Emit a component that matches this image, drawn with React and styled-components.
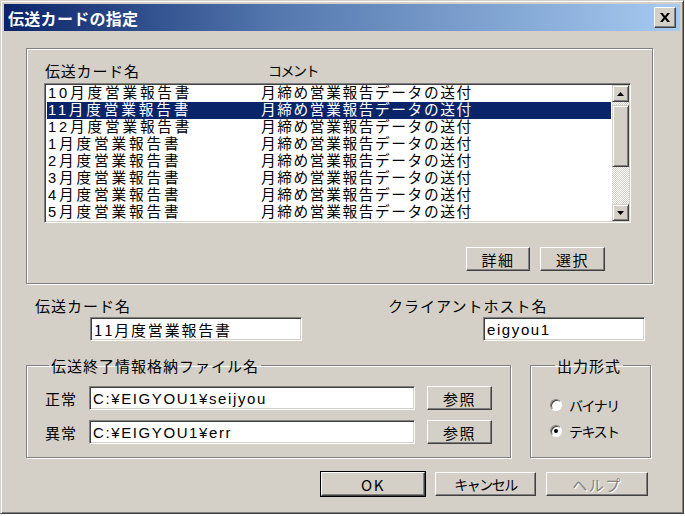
import React from 'react';
import styled, { createGlobalStyle } from 'styled-components';

const GlobalStyle = createGlobalStyle`
  html, body { margin: 0; padding: 0; background: #ffffff; }
  * { box-sizing: border-box; }
  body { font-family: "Noto Sans CJK JP", "Noto Sans", sans-serif; color: #000; }
`;

const FONT = `"Noto Sans CJK JP", "Noto Sans", sans-serif`;
const LIST_FONT = `"Liberation Sans", "Noto Sans CJK JP", sans-serif`;

const rows = [
  { name: '10月度営業報告書', comment: '月締め営業報告データの送付' },
  { name: '11月度営業報告書', comment: '月締め営業報告データの送付', selected: true },
  { name: '12月度営業報告書', comment: '月締め営業報告データの送付' },
  { name: '1月度営業報告書', comment: '月締め営業報告データの送付' },
  { name: '2月度営業報告書', comment: '月締め営業報告データの送付' },
  { name: '3月度営業報告書', comment: '月締め営業報告データの送付' },
  { name: '4月度営業報告書', comment: '月締め営業報告データの送付' },
  { name: '5月度営業報告書', comment: '月締め営業報告データの送付' },
];

export default function App() {
  return (
    <>
      <GlobalStyle />
      <Window>
        <TitleBar>
          <Title>伝送カードの指定</Title>
          <CloseButton>
            <svg width="10" height="9" viewBox="0 0 10 9">
              <path d="M0 0h2.6l2.4 3 2.4-3H10L6.4 4.5 10 9H7.4L5 6 2.6 9H0l3.6-4.5z" fill="#000" />
            </svg>
          </CloseButton>
        </TitleBar>

        <Content>
          <CardGroup>
            <ListHeader>
              <span className="name">伝送カード名</span>
              <span className="comment">コメント</span>
            </ListHeader>
            <ListBox>
              <ListRows>
                {rows.map((r) => (
                  <ListRow key={r.name} $selected={r.selected}>
                    <NameCell>{r.name}</NameCell>
                    <CommentCell>{r.comment}</CommentCell>
                  </ListRow>
                ))}
              </ListRows>
              <ScrollBar>
                <ScrollButton>
                  <svg width="7" height="4" viewBox="0 0 7 4"><path d="M3.5 0L7 4H0z" fill="#000" /></svg>
                </ScrollButton>
                <Track $h={3} />
                <Thumb />
                <Track />
                <ScrollButton>
                  <svg width="7" height="4" viewBox="0 0 7 4"><path d="M0 0h7L3.5 4z" fill="#000" /></svg>
                </ScrollButton>
              </ScrollBar>
            </ListBox>
            <ListButtons>
              <Button $w={64}>詳細</Button>
              <Button $w={65}>選択</Button>
            </ListButtons>
          </CardGroup>

          <FieldRow>
            <Field>
              <Label>伝送カード名</Label>
              <TextBox $indent={55} $w={212}>11月度営業報告書</TextBox>
            </Field>
            <Field>
              <Label>クライアントホスト名</Label>
              <TextBox $indent={95} $w={162} $latin>eigyou1</TextBox>
            </Field>
          </FieldRow>

          <GroupRow>
            <FileGroup>
              <Legend>伝送終了情報格納ファイル名</Legend>
              <FileLine>
                <FileLabel>正常</FileLabel>
                <TextBox $w={326} $latin>C:¥EIGYOU1¥seijyou</TextBox>
                <Button $w={65}>参照</Button>
              </FileLine>
              <FileLine>
                <FileLabel>異常</FileLabel>
                <TextBox $w={326} $latin>C:¥EIGYOU1¥err</TextBox>
                <Button $w={65}>参照</Button>
              </FileLine>
            </FileGroup>
            <FormatGroup>
              <Legend>出力形式</Legend>
              <RadioLine>
                <Radio />
                <RadioText>バイナリ</RadioText>
              </RadioLine>
              <RadioLine>
                <Radio $checked />
                <RadioText>テキスト</RadioText>
              </RadioLine>
            </FormatGroup>
          </GroupRow>

          <DialogButtons>
            <Button $w={104} $default>OK</Button>
            <Button $w={101} $narrow>キャンセル</Button>
            <Button $w={102} $disabled>ヘルプ</Button>
          </DialogButtons>
        </Content>
      </Window>
    </>
  );
}

const Window = styled.div`
  width: 684px;
  height: 514px;
  background: #d4d0c8;
  border: 1px solid;
  border-color: #d4d0c8 #404040 #404040 #d4d0c8;
  box-shadow: inset 1px 1px #ffffff, inset -1px -1px #808080;
  padding: 3px;
  display: flex;
  flex-direction: column;
`;

const TitleBar = styled.div`
  height: 27px;
  background: linear-gradient(to right, #0a246a 0%, #5477ae 40%, #a6caf0 100%);
  display: flex;
  align-items: center;
  justify-content: space-between;
  padding: 0 4px 0 4px;
`;

const Title = styled.div`
  font-family: ${FONT};
  font-weight: 700;
  font-size: 16px;
  color: #ffffff;
  letter-spacing: 0.3px;
`;

const CloseButton = styled.div`
  width: 22px;
  height: 21px;
  background: #d4d0c8;
  border: 1px solid;
  border-color: #ffffff #404040 #404040 #ffffff;
  box-shadow: inset -1px -1px #808080;
  display: flex;
  align-items: center;
  justify-content: center;
`;

const Content = styled.div`
  flex: 1;
  display: flex;
  flex-direction: column;
  padding: 17px 0 0 22px;
`;

const Etched = `
  border: 1px solid #808080;
  box-shadow: inset 1px 1px #ffffff, 1px 1px #ffffff;
`;

const CardGroup = styled.div`
  ${Etched}
  width: 627px;
  height: 236px;
  display: flex;
  flex-direction: column;
  padding: 11px 21px 0 17px;
`;

const ListHeader = styled.div`
  display: flex;
  height: 23px;
  font-family: ${FONT};
  font-size: 15px;
  padding-left: 1px;

  .name {
    width: 223px;
    letter-spacing: 0.8px;
  }

  .comment {
    letter-spacing: -1.5px;
    font-size: 14px;
  }
`;

const ListBox = styled.div`
  height: 140px;
  background: #ffffff;
  border: 1px solid;
  border-color: #808080 #ffffff #ffffff #808080;
  box-shadow: inset 1px 1px #404040, inset -1px -1px #d4d0c8;
  padding: 1px;
  display: flex;
`;

const ListRows = styled.div`
  flex: 1;
  display: flex;
  flex-direction: column;
  overflow: hidden;
  padding: 0 1px;
`;

const ListRow = styled.div`
  height: 17px;
  flex-shrink: 0;
  display: flex;
  align-items: center;
  font-family: ${LIST_FONT};
  font-size: 14.7px;
  line-height: 17px;
  padding-left: 1px;
  background: ${(p) => (p.$selected ? '#0a246a' : 'transparent')};
  color: ${(p) => (p.$selected ? '#ffffff' : '#000000')};
  white-space: nowrap;
`;

const NameCell = styled.span`
  width: 213px;
  letter-spacing: 2.8px;
`;

const CommentCell = styled.span`
  letter-spacing: 1.6px;
`;

const ScrollBar = styled.div`
  width: 17px;
  display: flex;
  flex-direction: column;
`;

const Raised = `
  background: #d4d0c8;
  border: 1px solid;
  border-color: #d4d0c8 #404040 #404040 #d4d0c8;
  box-shadow: inset 1px 1px #ffffff, inset -1px -1px #808080;
`;

const ScrollButton = styled.div`
  ${Raised}
  height: 17px;
  flex-shrink: 0;
  display: flex;
  align-items: center;
  justify-content: center;
`;

const Thumb = styled.div`
  ${Raised}
  height: 62px;
  flex-shrink: 0;
`;

const Track = styled.div`
  flex: ${(p) => (p.$h ? `0 0 ${p.$h}px` : '1')};
  background: repeating-conic-gradient(#ffffff 0 25%, #d4d0c8 0 50%) 0 0 / 2px 2px;
`;

const ListButtons = styled.div`
  display: flex;
  justify-content: flex-end;
  gap: 10px;
  margin-top: 24px;
  padding-right: 26px;
`;

const Button = styled.div`
  width: ${(p) => p.$w}px;
  height: 24px;
  background: #d4d0c8;
  border: 1px solid;
  border-color: #ffffff #404040 #404040 #ffffff;
  box-shadow: ${(p) =>
    p.$default
      ? 'inset -1px -1px #808080, 0 0 0 1px #000000'
      : 'inset -1px -1px #808080'};
  display: flex;
  align-items: center;
  justify-content: center;
  font-family: ${FONT};
  font-size: ${(p) => (p.$narrow ? '14px' : '15px')};
  letter-spacing: ${(p) => (p.$narrow ? '-1.5px' : '1.5px')};
  color: ${(p) => (p.$disabled ? '#808080' : '#000000')};
  text-shadow: ${(p) => (p.$disabled ? '1px 1px #ffffff' : 'none')};
  flex-shrink: 0;
  white-space: nowrap;
`;

const FieldRow = styled.div`
  display: grid;
  grid-template-columns: 353px 1fr;
  margin-top: 12px;
  padding-left: 9px;
`;

const Field = styled.div`
  display: flex;
  flex-direction: column;
`;

const Label = styled.div`
  font-family: ${FONT};
  font-size: 15px;
  line-height: 20px;
  letter-spacing: 1px;
  height: 21px;
  white-space: nowrap;
`;

const TextBox = styled.div`
  margin-left: ${(p) => p.$indent || 0}px;
  width: ${(p) => p.$w}px;
  height: 24px;
  background: #ffffff;
  border: 1px solid;
  border-color: #808080 #ffffff #ffffff #808080;
  box-shadow: inset 1px 1px #404040, inset -1px -1px #d4d0c8;
  display: flex;
  align-items: center;
  padding-left: 3px;
  font-family: ${(p) => (p.$latin ? `"Liberation Sans", ${FONT}` : FONT)};
  font-size: 15px;
  letter-spacing: ${(p) => (p.$latin ? '1.6px' : '1.8px')};
  white-space: nowrap;
  flex-shrink: 0;
`;

const GroupRow = styled.div`
  display: flex;
  gap: 19px;
  margin-top: 16px;
`;

const FieldSet = `
  margin: 0;
  border: 1px solid #808080;
  box-shadow: inset 1px 1px #ffffff, 1px 1px #ffffff;
  display: flex;
  flex-direction: column;
`;

const FileGroup = styled.fieldset`
  ${FieldSet}
  width: 485px;
  height: 101px;
  padding: 12px 0 0 17px;
  gap: 10px;
`;

const FormatGroup = styled.fieldset`
  ${FieldSet}
  width: 121px;
  height: 101px;
  padding: 21px 0 0 19px;
  gap: 6px;
`;

const Legend = styled.legend`
  font-family: ${FONT};
  font-size: 15px;
  line-height: 17px;
  letter-spacing: 1px;
  padding: 0 2px;
  margin-left: 5px;
`;

const FileLine = styled.div`
  display: flex;
  align-items: center;
  gap: 12px;
`;

const FileLabel = styled.div`
  width: 34px;
  font-family: ${FONT};
  font-size: 15px;
  letter-spacing: 1px;
  white-space: nowrap;
  padding-left: 1px;
  margin-right: -1px;
`;

const RadioLine = styled.div`
  display: flex;
  align-items: center;
  gap: 7px;
  height: 20px;
`;

const Radio = styled.div`
  position: relative;
  width: 12px;
  height: 12px;
  flex-shrink: 0;
  border-radius: 50%;
  background: #ffffff;
  border: 1px solid;
  border-color: #808080 #ffffff #ffffff #808080;
  box-shadow: inset 1px 1px #404040;

  &::after {
    content: '';
    display: ${(p) => (p.$checked ? 'block' : 'none')};
    position: absolute;
    left: 3px;
    top: 3px;
    width: 4px;
    height: 4px;
    border-radius: 50%;
    background: #000000;
  }
`;

const RadioText = styled.div`
  font-family: ${FONT};
  font-size: 14px;
  letter-spacing: -1.5px;
  white-space: nowrap;
`;

const DialogButtons = styled.div`
  display: flex;
  justify-content: flex-end;
  gap: 10px;
  margin-top: 14px;
  padding-right: 32px;
`;
